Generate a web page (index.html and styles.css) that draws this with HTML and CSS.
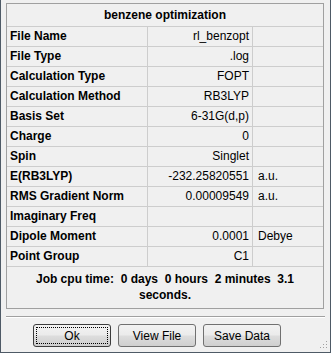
FILE: index.html
```html
<!DOCTYPE html>
<html lang="en">
<head>
    <meta charset="UTF-8">
    <title>benzene optimization</title>
    <link rel="stylesheet" href="styles.css">
</head>
<body>
    <div class="dialog">
        <div class="panel">
            <div class="panel-title">benzene optimization</div>
            <div class="row"><div class="label">File Name</div><div class="value">rl_benzopt</div><div class="unit"></div></div>
            <div class="row"><div class="label">File Type</div><div class="value">.log</div><div class="unit"></div></div>
            <div class="row"><div class="label">Calculation Type</div><div class="value">FOPT</div><div class="unit"></div></div>
            <div class="row"><div class="label">Calculation Method</div><div class="value">RB3LYP</div><div class="unit"></div></div>
            <div class="row"><div class="label">Basis Set</div><div class="value">6-31G(d,p)</div><div class="unit"></div></div>
            <div class="row"><div class="label">Charge</div><div class="value">0</div><div class="unit"></div></div>
            <div class="row"><div class="label">Spin</div><div class="value">Singlet</div><div class="unit"></div></div>
            <div class="row"><div class="label">E(RB3LYP)</div><div class="value">-232.25820551</div><div class="unit">a.u.</div></div>
            <div class="row"><div class="label">RMS Gradient Norm</div><div class="value">0.00009549</div><div class="unit">a.u.</div></div>
            <div class="row"><div class="label">Imaginary Freq</div><div class="value"></div><div class="unit"></div></div>
            <div class="row"><div class="label">Dipole Moment</div><div class="value">0.0001</div><div class="unit">Debye</div></div>
            <div class="row"><div class="label">Point Group</div><div class="value">C1</div><div class="unit"></div></div>
            <div class="job-time">Job cpu time:  0 days  0 hours  2 minutes  3.1<br>seconds.</div>
        </div>
        <div class="separator"></div>
        <div class="buttons">
            <button class="btn btn-default">Ok</button>
            <button class="btn">View File</button>
            <button class="btn">Save Data</button>
        </div>
        <svg class="grip" width="9" height="9" viewBox="0 0 9 9">
            <rect x="7" y="1" width="1" height="1" fill="#a0a0a0"/>
            <rect x="4" y="4" width="1" height="1" fill="#a0a0a0"/>
            <rect x="7" y="4" width="1" height="1" fill="#a0a0a0"/>
            <rect x="1" y="7" width="1" height="1" fill="#a0a0a0"/>
            <rect x="4" y="7" width="1" height="1" fill="#a0a0a0"/>
            <rect x="7" y="7" width="1" height="1" fill="#a0a0a0"/>
        </svg>
    </div>
</body>
</html>
```

FILE: styles.css
```css
body { margin: 0; padding: 0; background-color: #f0f0f0; font-family: "Liberation Sans", Arial, sans-serif; font-size: 12px; color: #000; }
.dialog { position: relative; box-sizing: border-box; width: 331px; height: 353px; padding: 3px 6px 0 5px; background-color: #f0f0f0; border: 1px solid #4e5a66; border-top: none; }
.panel { box-sizing: border-box; width: 318px; height: 306px; border: 1px solid #a0a0a0; }
.panel-title { box-sizing: border-box; height: 23px; line-height: 22px; text-align: center; font-weight: bold; border-bottom: 1px solid #cdcdcd; }
.row { display: grid; grid-template-columns: 141px 105px 70px; box-sizing: border-box; height: 20px; line-height: 19px; border-bottom: 1px solid #cdcdcd; }
.row > div { box-sizing: border-box; white-space: nowrap; overflow: hidden; }
.label { padding-left: 3px; font-weight: bold; border-right: 1px solid #cdcdcd; }
.value { padding-right: 3px; text-align: right; border-right: 1px solid #cdcdcd; }
.unit { padding-left: 5px; }
.job-time { padding-top: 4px; line-height: 16px; text-align: center; font-weight: bold; white-space: pre-wrap; }
.separator { margin: 7px 0 0 0; width: 319px; border-top: 1px solid #a0a0a0; border-bottom: 1px solid #ffffff; }
.buttons { display: flex; gap: 7px; padding: 6px 0 0 27px; }
.btn { position: relative; box-sizing: border-box; width: 78px; height: 23px; padding: 0; font-family: "Liberation Sans", Arial, sans-serif; font-size: 12px; color: #000; border: 1px solid #707070; border-radius: 3px; background: linear-gradient(#f2f2f2 0%, #ebebeb 48%, #dddddd 52%, #cfcfcf 100%); }
.btn-default { border-color: #3c3c3c; }
.btn-default::after { content: ""; position: absolute; left: 2px; top: 2px; right: 2px; bottom: 2px; border: 1px dotted #000; }
.grip { position: absolute; right: 2px; bottom: 3px; }
```
